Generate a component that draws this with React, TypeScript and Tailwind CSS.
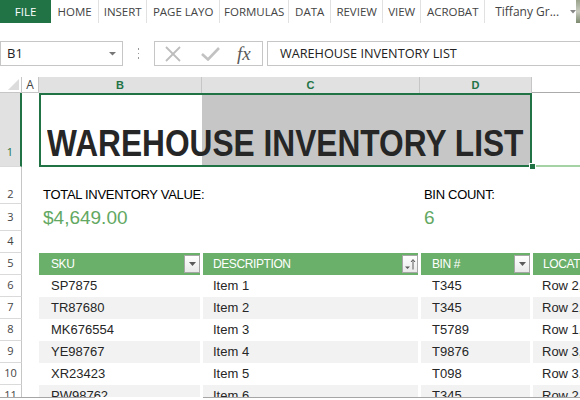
import React from "react";

const tabs: [string, number][] = [
  ["HOME", 48],
  ["INSERT", 48],
  ["PAGE LAYO", 73],
  ["FORMULAS", 69],
  ["DATA", 42],
  ["REVIEW", 52],
  ["VIEW", 38],
  ["ACROBAT", 64],
];

const data: [string, string, string, string][] = [
  ["SP7875", "Item 1", "T345", "Row 2,"],
  ["TR87680", "Item 2", "T345", "Row 2,"],
  ["MK676554", "Item 3", "T5789", "Row 1,"],
  ["YE98767", "Item 4", "T9876", "Row 3,"],
  ["XR23423", "Item 5", "T098", "Row 3,"],
  ["PW98762", "Item 6", "T345", "Row 2,"],
];

function FilterBtn() {
  return (
    <div className="w-[16px] h-[18px] border border-[#a6a6a6] bg-gradient-to-b from-white to-[#e9e9e9] flex items-center justify-center">
      <svg width="7" height="4" viewBox="0 0 7 4">
        <polygon points="0,0 7,0 3.5,4" fill="#5a5a5a" />
      </svg>
    </div>
  );
}

function SortBtn() {
  return (
    <div className="w-[16px] h-[18px] border border-[#a6a6a6] bg-gradient-to-b from-white to-[#e9e9e9] flex items-center justify-center">
      <svg width="12" height="12" viewBox="0 0 12 12">
        <polygon points="1,8.5 6,8.5 3.5,11" fill="#5a5a5a" />
        <line x1="9" y1="2" x2="9" y2="11.5" stroke="#5a5a5a" strokeWidth="1" />
        <polyline points="7,4 9,1.5 11,4" fill="none" stroke="#5a5a5a" strokeWidth="1" />
      </svg>
    </div>
  );
}

function RowHead({ n, cls = "" }: { n: number; cls?: string }) {
  return (
    <div
      className={
        "w-[22px] shrink-0 border-r border-b border-r-[#c6c6c6] border-b-[#dadada] flex justify-center text-[11px] text-[#444] font-['Open_Sans'] " +
        cls
      }
    >
      {n}
    </div>
  );
}

export default function App() {
  return (
    <div className="w-[580px] h-[400px] overflow-hidden bg-white relative font-['Liberation_Sans',sans-serif]">
      {/* Ribbon tabs */}
      <div className="h-[23px] flex font-['Open_Sans',sans-serif] text-[11.5px]">
        <div className="w-[53px] bg-[#217346] text-white flex items-center justify-center">FILE</div>
        {tabs.map(([t, w]) => (
          <div
            key={t}
            className="h-[23px] shrink-0 border-r border-[#e1e1e1] flex items-center justify-center text-[#444] whitespace-nowrap overflow-hidden"
            style={{ width: w }}
          >
            {t}
          </div>
        ))}
        <div className="flex items-center pl-[10px] text-[#444] whitespace-nowrap">
          <span className="text-[12px]">Tiffany Gr...</span>
          <svg width="6" height="4" viewBox="0 0 6 4" className="ml-[11px]">
            <polygon points="0,0 6,0 3,3.5" fill="#888" />
          </svg>
        </div>
        <div className="ml-auto w-[4px] h-[23px] bg-gradient-to-b from-[#9aa38c] via-[#c8cbbf] to-[#7d8a6f]" />
      </div>

      {/* Formula bar */}
      <div className="mt-[18px] h-[25px] flex">
        <div className="w-[123px] h-[25px] border border-[#c6c6c6] flex items-center pl-[6px] pr-[6px] text-[13px] text-[#222] font-['Open_Sans',sans-serif]">
          <span className="flex-1">B1</span>
          <svg width="7" height="4" viewBox="0 0 7 4">
            <polygon points="0,0 7,0 3.5,3.5" fill="#777" />
          </svg>
        </div>
        <div className="w-[31px] flex flex-col items-center justify-center gap-[3px]">
          <div className="w-[1px] h-[1.5px] bg-[#999]" />
          <div className="w-[1px] h-[1.5px] bg-[#999]" />
          <div className="w-[1px] h-[1.5px] bg-[#999]" />
        </div>
        <div className="w-[109px] h-[25px] border border-[#c6c6c6] flex items-center">
          <svg width="18" height="16" viewBox="0 0 18 16" className="ml-[9px]">
            <line x1="2" y1="1" x2="16" y2="15" stroke="#bdbdbd" strokeWidth="1.8" />
            <line x1="16" y1="1" x2="2" y2="15" stroke="#bdbdbd" strokeWidth="1.8" />
          </svg>
          <svg width="19" height="14" viewBox="0 0 19 14" className="ml-[19px]">
            <polyline points="1,7 7,12.5 18,1" fill="none" stroke="#c2c2c2" strokeWidth="2.6" />
          </svg>
          <span className="ml-[17px] font-['Liberation_Serif',serif] italic text-[19px] leading-none text-[#5a5a5a]">fx</span>
        </div>
        <div className="ml-[4px] flex-1 h-[25px] border border-[#c6c6c6] border-r-0 flex items-center pl-[12px] text-[12.7px] text-[#222] font-['Open_Sans',sans-serif] whitespace-nowrap">
          WAREHOUSE INVENTORY LIST
        </div>
      </div>

      {/* Sheet */}
      <div className="mt-[11px] h-[320px] overflow-hidden relative">
        {/* Column headers */}
        <div className="h-[16px] flex text-[11px] leading-none">
          <div className="w-[22px] shrink-0 border-r border-b border-[#c6c6c6] relative bg-white">
            <svg width="11" height="11" viewBox="0 0 11 11" className="absolute right-[2px] bottom-[2px]">
              <polygon points="11,0 11,11 0,11" fill="#dcdcdc" />
            </svg>
          </div>
          <div className="w-[17px] shrink-0 border-r border-b border-[#c6c6c6] flex items-center justify-center text-[#444] font-['Open_Sans'] text-[12px]">
            A
          </div>
          <div className="w-[163px] shrink-0 bg-[#e1e1e1] border-r border-[#c6c6c6] flex items-center justify-center font-bold text-[#217346]">
            B
          </div>
          <div className="w-[218px] shrink-0 bg-[#e1e1e1] border-r border-[#c6c6c6] flex items-center justify-center font-bold text-[#217346]">
            C
          </div>
          <div className="w-[112px] shrink-0 bg-[#e1e1e1] border-r border-[#c6c6c6] flex items-center justify-center font-bold text-[#217346]">
            D
          </div>
          <div className="flex-1 border-b border-[#ababab]" />
        </div>

        {/* Row 1 */}
        <div className="h-[74px] flex">
          <div className="w-[22px] shrink-0 bg-[#e1e1e1] border-r-2 border-r-[#217346] border-b border-b-[#dadada] flex items-end justify-center pb-[6px] text-[11px] text-[#217346] font-['Open_Sans']">
            1
          </div>
          <div className="w-[17px] shrink-0" />
          <div className="w-[163px] shrink-0 flex items-end pl-[8px] pb-[5px] whitespace-nowrap">
            <span className="inline-block origin-left scale-x-[0.88] font-bold text-[36px] leading-none text-[#262626]">
              WAREHOUSE INVENTORY LIST
            </span>
          </div>
          <div className="w-[218px] shrink-0 bg-[#c6c6c6]" />
          <div className="w-[112px] shrink-0 bg-[#c6c6c6]" />
          <div className="flex-1" />
        </div>

        {/* Row 2 */}
        <div className="h-[37px] flex">
          <RowHead n={2} cls="items-end pb-[1px]" />
          <div className="w-[17px] shrink-0" />
          <div className="w-[163px] shrink-0 flex items-end pl-[4px] pb-[3px] whitespace-nowrap text-[13px] leading-none tracking-[-0.3px] text-black">
            TOTAL INVENTORY VALUE:
          </div>
          <div className="w-[218px] shrink-0" />
          <div className="w-[112px] shrink-0 flex items-end pl-[4px] pb-[3px] whitespace-nowrap text-[13px] leading-none tracking-[-0.3px] text-black">
            BIN COUNT:
          </div>
          <div className="flex-1" />
        </div>

        {/* Row 3 */}
        <div className="h-[27px] flex">
          <RowHead n={3} cls="items-center" />
          <div className="w-[17px] shrink-0" />
          <div className="w-[163px] shrink-0 flex items-end pl-[4px] pb-[4px] whitespace-nowrap text-[19px] leading-none text-[#62a862]">
            $4,649.00
          </div>
          <div className="w-[218px] shrink-0" />
          <div className="w-[112px] shrink-0 flex items-end pl-[4px] pb-[4px] text-[19px] leading-none text-[#62a862]">
            6
          </div>
          <div className="flex-1" />
        </div>

        {/* Row 4 */}
        <div className="h-[22px] flex">
          <RowHead n={4} cls="items-center" />
        </div>

        {/* Row 5: table header */}
        <div className="h-[22px] flex text-[12px] tracking-[-0.4px] text-white">
          <RowHead n={5} cls="items-center tracking-normal" />
          <div className="w-[17px] shrink-0" />
          <div className="w-[163px] shrink-0 pr-[2px]">
            <div className="h-full bg-[#6aaf6a] flex items-center pl-[12px] pr-0">
              <span className="flex-1">SKU</span>
              <FilterBtn />
            </div>
          </div>
          <div className="w-[218px] shrink-0 pl-[1px] pr-[2px]">
            <div className="h-full bg-[#6aaf6a] flex items-center pl-[10px]">
              <span className="flex-1">DESCRIPTION</span>
              <SortBtn />
            </div>
          </div>
          <div className="w-[112px] shrink-0 pl-[1px] pr-[2px]">
            <div className="h-full bg-[#6aaf6a] flex items-center pl-[11px]">
              <span className="flex-1">BIN #</span>
              <FilterBtn />
            </div>
          </div>
          <div className="flex-1 pl-[1px] overflow-hidden">
            <div className="h-full bg-[#6aaf6a] flex items-center pl-[10px] whitespace-nowrap">LOCAT</div>
          </div>
        </div>

        {/* Data rows */}
        {data.map((r, i) => {
          const bg = i % 2 === 1 ? "bg-[#f2f2f2]" : "bg-white";
          return (
            <div key={i} className="h-[22px] flex text-[13px] text-[#262626]">
              <RowHead n={6 + i} cls="items-center" />
              <div className="w-[17px] shrink-0" />
              <div className="w-[163px] shrink-0 pr-[2px]">
                <div className={"h-full flex items-center pl-[12px] " + bg}>{r[0]}</div>
              </div>
              <div className="w-[218px] shrink-0 pl-[1px] pr-[2px]">
                <div className={"h-full flex items-center pl-[10px] " + bg}>{r[1]}</div>
              </div>
              <div className="w-[112px] shrink-0 pl-[1px] pr-[2px]">
                <div className={"h-full flex items-center pl-[11px] " + bg}>{r[2]}</div>
              </div>
              <div className="flex-1 pl-[1px]">
                <div className={"h-full flex items-center pl-[9px] whitespace-nowrap " + bg}>{r[3]}</div>
              </div>
            </div>
          );
        })}

        {/* Selection overlay */}
        <div className="absolute left-[39px] top-[16px] w-[493px] h-[74px] border-2 border-[#217346] pointer-events-none" />
        <div className="absolute left-[535px] top-[88px] w-[45px] h-[2px] bg-[#a6d3a6]" />
        <div className="absolute left-[529px] top-[86px] w-[7px] h-[7px] bg-[#217346] border border-white" />
      </div>

      {/* Bottom edge */}
      <div className="h-[3px] flex">
        <div className="w-[95px] border-t border-[#a6a6a6] bg-white" />
        <div className="w-[108px]" />
        <div className="flex-1 border-t border-[#a6a6a6] bg-white" />
      </div>
    </div>
  );
}
